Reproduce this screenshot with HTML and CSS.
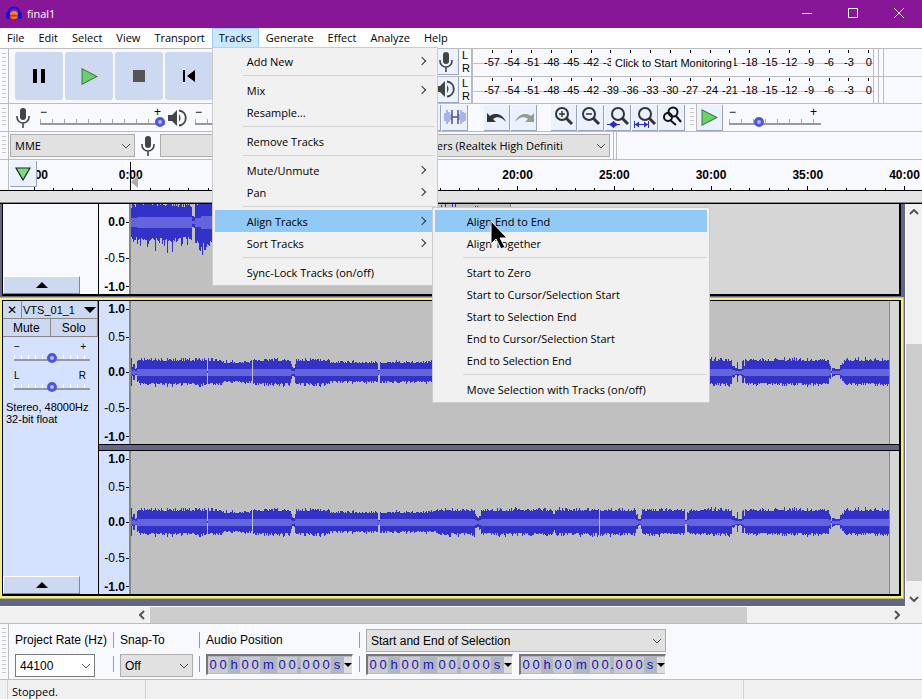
FILE: index.html
```html
<!DOCTYPE html>
<html lang="en">
<head>
    <meta charset="UTF-8">
    <meta name="viewport" content="width=device-width, initial-scale=1.0">
    <link rel="stylesheet" href="styles.css">
    <title>final1</title>
</head>
<body>
    <svg class="defs" aria-hidden="true">
        <symbol id="chevron" viewBox="0 0 10 6"><path d="M1 1l4 4 4-4" fill="none" stroke="#555"/></symbol>
        <symbol id="mic" viewBox="0 0 16 20"><rect x="5" y="0" width="6" height="12" rx="3" fill="#444"/><path d="M2 8v1a6 6 0 0 0 12 0V8M8 15v5" fill="none" stroke="#444" stroke-width="1.6"/></symbol>
        <symbol id="speaker" viewBox="0 0 19 18"><path d="M0 6h4l5-5v16l-5-5H0z" fill="#444"/><path d="M11 5q3 4 0 8z" fill="#444"/><path d="M11 1.500c9 1 9 14 0 15" fill="none" stroke="#444" stroke-width="1.800"/></symbol>
        <symbol id="play" viewBox="0 0 16 16"><path d="M1 .8v14.400L15 8z" fill="#6ad06a" stroke="#3f7a3f" stroke-width="1"/></symbol>
        <symbol id="lens" viewBox="0 0 22 22"><circle cx="9" cy="8" r="6" fill="none" stroke="#333" stroke-width="2"/><path d="M13 12l6 6" stroke="#333" stroke-width="3"/></symbol>
        <symbol id="undo" viewBox="0 0 22 12"><path d="M1 1v9h9L7 7c4-3 9-2 13 3C17 2 9 0 4 4z"/></symbol>
    </svg>

    <header class="titlebar">
        <svg class="logo" viewBox="0 0 16 14"><path d="M2.500 9V7a5.500 5.500 0 0 1 11 0v2" fill="none" stroke="#1010e0" stroke-width="2"/><rect x="0" y="6" width="4" height="7" rx="2" fill="#1010e0"/><rect x="12" y="6" width="4" height="7" rx="2" fill="#1010e0"/><ellipse cx="8" cy="9" rx="4" ry="4" fill="#f08a10"/><path d="M4 9.500l1-1 1 1 1-1.500 1 1.500 1-1.500 1 1.500 1-1 1 1v1H4z" fill="#e01818"/></svg>
        <span class="title">final1</span>
        <button class="winbtn" aria-label="Minimize"><svg viewBox="0 0 10 10"><path d="M0 5.500h10"/></svg></button>
        <button class="winbtn" aria-label="Maximize"><svg viewBox="0 0 10 10"><path d="M.5.5h9v9h-9z"/></svg></button>
        <button class="winbtn" aria-label="Close"><svg viewBox="0 0 10 10"><path d="M0 0l10 10M10 0L0 10"/></svg></button>
    </header>

    <nav class="menubar">
        <button>File</button>
        <button>Edit</button>
        <button>Select</button>
        <button>View</button>
        <button>Transport</button>
        <div class="open">
            <button>Tracks</button>
            <ul class="menu tracks-menu">
                <li><button class="more">Add New</button></li>
                <li class="sep"></li>
                <li><button class="more">Mix</button></li>
                <li><button>Resample...</button></li>
                <li class="sep"></li>
                <li><button>Remove Tracks</button></li>
                <li class="sep"></li>
                <li><button class="more">Mute/Unmute</button></li>
                <li><button class="more">Pan</button></li>
                <li class="sep"></li>
                <li class="parent">
                    <button class="more hot">Align Tracks</button>
                    <ul class="menu align-menu">
                        <li class="parent">
                            <button class="hot">Align End to End</button>
                            <svg class="cursor" viewBox="0 0 18 30"><path d="M1 1v23l5-5 5 10 4-2-5-9h7z" fill="#000" stroke="#fff" stroke-width="1"/></svg>
                        </li>
                        <li><button>Align Together</button></li>
                        <li class="sep"></li>
                        <li><button>Start to Zero</button></li>
                        <li><button>Start to Cursor/Selection Start</button></li>
                        <li><button>Start to Selection End</button></li>
                        <li><button>End to Cursor/Selection Start</button></li>
                        <li><button>End to Selection End</button></li>
                        <li class="sep"></li>
                        <li><button>Move Selection with Tracks (on/off)</button></li>
                    </ul>
                </li>
                <li><button class="more">Sort Tracks</button></li>
                <li class="sep"></li>
                <li><button>Sync-Lock Tracks (on/off)</button></li>
            </ul>
        </div>
        <button>Generate</button>
        <button>Effect</button>
        <button>Analyze</button>
        <button>Help</button>
    </nav>

    <section class="toolrow transport-row">
        <div class="dock transport">
            <i class="grip"></i>
            <button class="big" aria-label="Pause"><svg viewBox="0 0 14 14"><path d="M1 0h4v14H1zM9 0h4v14H9z"/></svg></button>
            <button class="big" aria-label="Play"><svg class="play"><use href="#play"/></svg></button>
            <button class="big" aria-label="Stop"><svg viewBox="0 0 14 14"><path d="M1 1h12v12H1z" fill="#555"/></svg></button>
            <button class="big" aria-label="Skip to Start"><svg viewBox="0 0 14 14"><path d="M1 1h2v12H1zM13 1v12L5 7z"/></svg></button>
        </div>
        <div class="meters">
            <div class="meter">
                <button class="tool" aria-label="Record meter"><svg class="mic"><use href="#mic"/></svg></button>
                <div class="lr"><span>L</span><span>R</span></div>
                <div class="scale"></div>
                <span class="hint">Click to Start Monitoring</span>
            </div>
            <div class="meter">
                <button class="tool" aria-label="Playback meter"><svg class="speaker"><use href="#speaker"/></svg></button>
                <div class="lr"><span>L</span><span>R</span></div>
                <div class="scale"></div>
            </div>
        </div>
    </section>

    <section class="toolrow">
        <div class="dock mixer">
            <i class="grip"></i>
            <svg class="mic"><use href="#mic"/></svg>
            <label class="slider"><span>−</span><span>+</span><input type="range" aria-label="Recording volume" value="100"></label>
            <svg class="speaker"><use href="#speaker"/></svg>
            <label class="slider"><span>−</span><span>+</span><input type="range" aria-label="Playback volume" value="100"></label>
        </div>
        <div class="tools">
            <button class="tool" aria-label="Trim"></button>
            <button class="tool" aria-label="Silence"><svg viewBox="0 0 22 16"><path d="M1 4v8M3 1v14M5 3v10M7 5v6M15 5v6M17 1v14M19 3v10M21 4v8" stroke="#8a97e8" stroke-width="1.400"/><path d="M8 1v14M14 1v14M8 8h6" stroke="#556" stroke-width="1.500"/></svg></button>
        </div>
        <div class="tools">
            <button class="tool" aria-label="Undo"><svg viewBox="0 0 22 16"><g transform="translate(0 3)" fill="#333"><use href="#undo" width="22" height="12"/></g></svg></button>
            <button class="tool" aria-label="Redo"><svg viewBox="0 0 22 16"><g transform="translate(22 3) scale(-1 1)" fill="#999"><use href="#undo" width="22" height="12"/></g></svg></button>
        </div>
        <div class="tools">
            <button class="tool" aria-label="Zoom In"><svg viewBox="0 0 22 22"><use href="#lens"/><path d="M6 8h6M9 5v6" stroke="#333" stroke-width="1.500"/></svg></button>
            <button class="tool" aria-label="Zoom Out"><svg viewBox="0 0 22 22"><use href="#lens"/><path d="M6 8h6" stroke="#333" stroke-width="1.500"/></svg></button>
            <button class="tool" aria-label="Fit Selection"><svg viewBox="0 0 22 22"><use href="#lens" x="2"/><path d="M0 18.500h13M6.500 15v7" stroke="#2b2bc8"/><path d="M2 18.500l4-3v6zM11 18.500l-4-3v6z" fill="#2b2bc8"/></svg></button>
            <button class="tool" aria-label="Fit Project"><svg viewBox="0 0 22 22"><use href="#lens" x="2"/><path d="M.5 15v7M14.500 15v7M0 18.500h15" stroke="#2b2bc8"/><path d="M1 18.500l4-3v6zM14 18.500l-4-3v6z" fill="#2b2bc8"/></svg></button>
            <button class="tool" aria-label="Zoom Toggle"><svg viewBox="0 0 22 22"><g fill="none" stroke="#111" stroke-width="2"><circle cx="7" cy="11" r="4"/><circle cx="12" cy="6" r="4.500"/><path d="M9 14l6 5M15 10l5 6"/></g></svg></button>
        </div>
        <i class="grip small"></i>
        <button class="tool" aria-label="Play-at-Speed"><svg class="play"><use href="#play"/></svg></button>
        <label class="slider speed"><span>−</span><span>+</span><input type="range" aria-label="Playback speed" value="31"></label>
    </section>

    <section class="toolrow devices">
        <i class="grip"></i>
        <label class="select host"><select aria-label="Audio host"><option>MME</option></select><svg><use href="#chevron"/></svg></label>
        <svg class="mic"><use href="#mic"/></svg>
        <label class="select device"><select aria-label="Recording device"><option></option></select><svg><use href="#chevron"/></svg></label>
        <label class="select output"><select aria-label="Playback device"><option>Speakers (Realtek High Definiti</option></select><svg><use href="#chevron"/></svg></label>
        <i class="divider"></i>
    </section>

    <section class="timeline">
        <div class="minutes"></div>
        <i class="playhead"></i>
        <button class="tool pin" aria-label="Pinned play head"><svg viewBox="0 0 16 14"><path d="M1 1h14L8 13z" fill="#7bdc78" stroke="#222" stroke-width="1.200"/></svg></button>
    </section>

    <main class="project">
        <div class="tracks">
            <article class="track scrolled">
                <div class="panel">
                    <button class="collapse" aria-label="Collapse"></button>
                </div>
                <div class="channels">
                    <div class="channel">
                        <div class="levels"><b>0.0</b><span>-0.5</span><b>-1.0</b></div>
                        <svg class="wave first" viewBox="0 0 379 90" preserveAspectRatio="none" data-clip="first"></svg>
                        <div class="blank"></div>
                    </div>
                </div>
            </article>
            <article class="track selected">
                <div class="panel">
                    <div class="pair name"><button aria-label="Close track">✕</button><button>VTS_01_1<i></i></button></div>
                    <div class="pair"><button>Mute</button><button>Solo</button></div>
                    <label class="slider"><span>−</span><span>+</span><input type="range" aria-label="Gain"></label>
                    <label class="slider"><span>L</span><span>R</span><input type="range" aria-label="Pan"></label>
                    <p>Stereo, 48000Hz<br>32-bit float</p>
                    <button class="collapse" aria-label="Collapse"></button>
                </div>
                <div class="channels">
                    <div class="channel">
                        <div class="levels"><b>1.0</b><span>0.5</span><b>0.0</b><span>-0.5</span><b>-1.0</b></div>
                        <svg class="wave" viewBox="0 0 758 143" preserveAspectRatio="none" data-clip="second"></svg>
                        <div class="blank end"></div>
                    </div>
                    <div class="channel">
                        <div class="levels"><b>1.0</b><span>0.5</span><b>0.0</b><span>-0.5</span><b>-1.0</b></div>
                        <svg class="wave" viewBox="0 0 758 143" preserveAspectRatio="none" data-clip="second"></svg>
                        <div class="blank end"></div>
                    </div>
                </div>
            </article>
        </div>
        <div class="vscroll">
            <button aria-label="Scroll up"><svg class="up"><use href="#chevron"/></svg></button>
            <i class="thumb"></i>
            <button aria-label="Scroll down"><svg><use href="#chevron"/></svg></button>
        </div>
    </main>
    <div class="hscroll">
        <button aria-label="Scroll left"><svg class="left"><use href="#chevron"/></svg></button>
        <i class="thumb"></i>
        <button aria-label="Scroll right"><svg class="right"><use href="#chevron"/></svg></button>
    </div>

    <section class="selection">
        <i class="grip"></i>
        <div class="field">
            <label for="rate">Project Rate (Hz)</label>
            <div class="select rate"><input type="text" id="rate" value="44100"><svg><use href="#chevron"/></svg></div>
        </div>
        <div class="field ruled">
            <label for="snap">Snap-To</label>
            <div class="select snap"><select id="snap"><option>Off</option></select><svg><use href="#chevron"/></svg></div>
        </div>
        <div class="field ruled">
            <span>Audio Position</span>
            <div class="time"></div>
        </div>
        <div class="field ruled">
            <div class="select range"><select aria-label="Selection mode"><option>Start and End of Selection</option></select><svg><use href="#chevron"/></svg></div>
            <div class="times"><div class="time"></div><div class="time"></div></div>
        </div>
    </section>

    <footer class="status">
        <span>Stopped.</span>
        <span></span>
        <span></span>
    </footer>
    <script src="app.js"></script>
</body>
</html>
```
FILE: styles.css
```css
*{
    box-sizing: border-box;
}
html, body{
    height: 100%;
}
body{
    margin: 0;
    display: flex;
    flex-direction: column;
    overflow: hidden;
    background: #f0f0f0;
    color: #000;
    font-family: "Open Sans", "Noto Sans", sans-serif;
    font-size: 11px;
}
button, input, select{
    margin: 0;
    padding: 0;
    border: 0;
    border-radius: 0;
    background: none;
    color: inherit;
    font: inherit;
}
svg{
    display: block;
    flex: none;
}
ul{
    list-style: none;
    margin: 0;
    padding: 0;
}
.defs{
    position: absolute;
    width: 0;
    height: 0;
}

/* title bar */
.titlebar{
    flex: none;
    display: flex;
    align-items: center;
    height: 28px;
    padding: 0 0 2px 6px;
    background: #881798;
    color: #fff;
}
.logo{
    width: 16px;
    height: 14px;
    margin-right: 5px;
}
.title{
    flex: 1;
}
.winbtn{
    display: grid;
    place-items: center;
    width: 46px;
    height: 26px;
}
.winbtn svg{
    width: 10px;
    height: 10px;
    fill: none;
    stroke: #fff;
}

/* menus */
.menubar{
    flex: none;
    display: flex;
    height: 20px;
    background: #fff;
}
.menubar > button, .open > button{
    height: 20px;
    padding: 0 7px;
    line-height: 20px;
}
.open{
    position: relative;
}
.open > button{
    background: #cce8ff;
    outline: 1px solid #99d1ff;
    outline-offset: -1px;
}
.menu{
    position: absolute;
    z-index: 5;
    padding: 2px;
    border: 1px solid #ccc;
    background: #f1f1f1;
}
.tracks-menu{
    top: 19px;
    left: 0;
    width: 226px;
}
.align-menu{
    top: -3px;
    left: 217px;
    width: 278px;
}
.parent{
    position: relative;
}
.menu button{
    display: flex;
    align-items: center;
    justify-content: space-between;
    width: 100%;
    height: 22px;
    padding: 0 10px 0 32px;
    text-align: left;
}
.menu .hot{
    background: #91c9f7;
}
.more::after{
    content: "";
    width: 5px;
    height: 5px;
    border: solid #333;
    border-width: 1px 1px 0 0;
    transform: rotate(45deg);
}
.sep{
    height: 7px;
    padding: 3px 0 3px 28px;
}
.sep::before{
    content: "";
    display: block;
    height: 1px;
    background: #d4d4d4;
}
.cursor{
    position: absolute;
    z-index: 6;
    top: 10px;
    left: 55px;
    width: 18px;
    height: 30px;
}

/* toolbars */
.toolrow{
    flex: none;
    display: flex;
    align-items: center;
    height: 28px;
    border-bottom: 1px solid #bbb;
    background: #f8f9ff;
}
.transport-row{
    height: 56px;
    border-top: 1px solid #bbb;
}
.dock{
    flex: 0 0 415px;
    display: flex;
    align-items: center;
    align-self: stretch;
    overflow: hidden;
}
.grip{
    flex: 0 0 9px;
    align-self: stretch;
    margin-right: 6px;
    border-right: 1px solid #bbb;
    background: repeating-linear-gradient(#c4c4c4 0 1px, transparent 1px 4px) 2px 4px / 4px calc(100% - 8px) no-repeat;
}
.grip.small{
    margin: 0 0 0 3px;
}
.transport{
    flex-basis: 433px;
    gap: 2px;
}
.transport .grip{
    margin-right: 4px;
}
.big{
    flex: none;
    display: grid;
    place-items: center;
    width: 48px;
    height: 48px;
    border-radius: 3px;
    background: #cdd9f0;
}
.big svg{
    width: 14px;
    height: 14px;
}
.big .play, .play{
    width: 17px;
    height: 17px;
}
.mic{
    width: 16px;
    height: 20px;
}
.speaker{
    width: 19px;
    height: 18px;
}
.mixer .grip{
    margin-right: 0;
}
.mixer .mic{
    margin: 0 9px 0 6px;
}
.mixer .speaker{
    margin: 0 8px 0 3px;
}
.tool{
    flex: none;
    display: grid;
    place-items: center;
    width: 26px;
    height: 26px;
    border: solid #9aa3bd;
    border-width: 0 1px 1px 0;
    background: #eaf1ff;
}
.tool svg:not([class]){
    width: 22px;
    height: 22px;
}
.tools{
    display: flex;
    gap: 1px;
    margin-right: 14px;
}
.tools:nth-of-type(2){
    margin-right: 16px;
}
.tools:last-of-type{
    margin-right: 0;
}
.slider{
    flex: none;
    display: flex;
    flex-wrap: wrap;
    justify-content: space-between;
    width: 125px;
    font-family: "Liberation Sans", Arial, sans-serif;
    font-size: 12px;
    line-height: 8px;
}
.slider span{
    padding: 0 4px 0 0;
}
.slider input{
    width: 100%;
    height: 12px;
    appearance: none;
    background:
        linear-gradient(#999, #999) 0 7px / 100% 2px no-repeat,
        repeating-linear-gradient(to right, #aaa 0 1px, transparent 1px 12px) 0 3px / 100% 4px no-repeat;
}
.slider input::-webkit-slider-thumb{
    appearance: none;
    width: 10px;
    height: 10px;
    border: 3px solid #4a55e8;
    border-radius: 50%;
    background: #bbb;
}
.speed{
    width: 92px;
    margin-left: 6px;
}

/* meters */
.meters{
    flex: 1;
    align-self: stretch;
    display: flex;
    flex-direction: column;
}
.meter{
    position: relative;
    flex: 1;
    display: flex;
    align-items: center;
    border-bottom: 1px solid #bbb;
    font-family: "Liberation Sans", Arial, sans-serif;
    font-size: 11px;
}
.meter:last-child{
    border-bottom: 0;
}
.lr{
    display: flex;
    flex-direction: column;
    width: 12px;
    padding-left: 3px;
    line-height: 13px;
}
.scale{
    flex: 0 1 403px;
    align-self: stretch;
    display: flex;
    justify-content: space-between;
    padding: 1px 4px 0 19px;
    border: 1px solid #bbb;
    border-width: 0 1px 0 2px;
    background: linear-gradient(#c4c4c4, #c4c4c4) 0 14px / 100% 1px no-repeat;
}
.scale span{
    display: flex;
    flex-direction: column;
    align-items: center;
    width: 0;
    line-height: 15px;
}
.scale span::before{
    content: "";
    flex: none;
    width: 1px;
    height: 3px;
    margin-bottom: 2px;
    background: #000;
}
.meter::after{
    content: "";
    align-self: stretch;
    width: 4px;
    margin-left: 4px;
    border: solid #bbb;
    border-width: 0 1px;
}
.hint{
    position: absolute;
    top: 5px;
    left: 178px;
    padding: 0 2px 0 4px;
    background: #f8f9ff;
    line-height: 18px;
}

/* drop-downs */
.select{
    display: grid;
    align-items: center;
    height: 23px;
    border: 1px solid #adadad;
    background: #e1e1e1;
}
.select > *{
    grid-area: 1 / 1;
}
.select select, .select input{
    width: 100%;
    height: 100%;
    padding: 0 20px 0 4px;
    appearance: none;
}
.select svg{
    justify-self: end;
    width: 10px;
    height: 6px;
    margin-right: 3px;
    pointer-events: none;
}
.devices .grip{
    margin-right: 1px;
}
.host{
    flex: 0 0 125px;
}
.devices .mic{
    margin: 0 4px 0 5px;
}
.device{
    flex: 0 0 220px;
}
.output{
    flex: 0 0 209px;
    margin-left: 21px;
}
.divider{
    align-self: stretch;
    width: 4px;
    margin-left: 3px;
    border: solid #bbb;
    border-width: 0 1px;
}

/* timeline */
.timeline{
    position: relative;
    flex: none;
    height: 44px;
    border-bottom: 1px solid #000;
    background: #e4e4e4;
    box-shadow: inset 0 -1px #888;
}
.minutes{
    display: flex;
    justify-content: space-between;
    align-items: flex-end;
    height: 31px;
    padding: 0 17px 0 34px;
    border-bottom: 1px solid #000;
    background: linear-gradient(#bbb, #bbb) 8px 0 / 1px 100% no-repeat, #f8f9ff;
    font: bold 12px/14px "Liberation Sans", Arial, sans-serif;
}
.minutes span{
    display: flex;
    flex-direction: column;
    align-items: center;
    width: 0;
}
.minutes span::after{
    content: "";
    width: 1px;
    height: 2px;
    background: #000;
}
.minutes .major::after{
    height: 4px;
    margin-top: 4px;
}
.playhead{
    position: absolute;
    top: 2px;
    left: 130px;
    width: 8px;
    height: 28px;
    border-left: 1px solid #000;
}
.playhead::after{
    content: "";
    display: block;
    margin-top: 14px;
    height: 12px;
    background: #aaa;
    clip-path: polygon(0 50%, 100% 0, 100% 100%);
}
.pin{
    position: absolute;
    top: 1px;
    left: 10px;
    width: 27px;
}
.pin svg:not([class]){
    width: 16px;
    height: 14px;
}

/* tracks */
.project{
    flex: 1;
    display: flex;
    min-height: 0;
}
.tracks{
    flex: 1;
    min-width: 0;
    padding-right: 2px;
    border-bottom: 1px solid #fff;
    background: #646687;
}
.track{
    display: flex;
    margin: 0 2px 0 2px;
    border: solid #000;
    border-width: 0 2px 2px 1px;
}
.track.selected{
    margin-top: 4px;
    border-top-width: 1px;
    box-shadow: 0 0 0 2px #f4f07a, 0 0 0 3px #b8b878;
}
.panel{
    flex: 0 0 96px;
    display: flex;
    flex-direction: column;
    border-right: 1px solid #000;
    background: #f8f9ff;
    font: 11px/12px "Liberation Sans", Arial, sans-serif;
}
.selected .panel{
    background: #d4e2ff;
}
.pair{
    display: grid;
    grid-template-columns: 1fr 1fr;
    height: 18px;
}
.name{
    grid-template-columns: 19px 1fr;
}
.pair button{
    display: flex;
    align-items: center;
    justify-content: center;
    border: solid #888;
    border-width: 0 1px 1px 0;
    background: #cdd9f0;
    font-size: 12px;
}
.name button:last-child{
    justify-content: space-between;
    padding: 0 1px;
    font-size: 11px;
}
.pair i{
    border: solid transparent;
    border-width: 6px 6px 0 6px;
    border-top-color: #000;
}
.panel .slider{
    width: 76px;
    margin: 4px 0 0 11px;
    font-size: 10px;
    line-height: 11px;
}
.panel .slider input{
    background:
        linear-gradient(#999, #999) 0 7px / 100% 2px no-repeat,
        repeating-linear-gradient(to right, #fff 0 1px, transparent 1px 7px) 0 3px / 100% 4px no-repeat;
}
.panel .slider + .slider{
    margin-top: 6px;
}
.panel p{
    margin: 8px 0 0 3px;
}
.collapse{
    display: grid;
    place-items: center;
    width: 77px;
    height: 18px;
    margin-top: auto;
    border: 1px solid #888;
    border-color: #fff #888 #888 #fff;
    background: #cdd9f0;
}
.collapse::before{
    content: "";
    border: solid transparent;
    border-width: 0 6px 6px;
    border-bottom-color: #000;
}
.channels{
    flex: 1;
    min-width: 0;
    display: flex;
    flex-direction: column;
    gap: 5px;
    background: #646687;
}
.channel{
    display: flex;
}
.channel + .channel{
    border-top: 1px solid #000;
}
.channel:not(:last-child){
    border-bottom: 1px solid #000;
}
.levels{
    flex: 0 0 32px;
    display: grid;
    grid-template-rows: 16px 40px 30px 42px 15px;
    justify-items: end;
    align-items: center;
    border: solid #888;
    border-width: 0 2px 0 0;
    background: #f8f9ff;
    font: 12px/14px "Liberation Sans", Arial, sans-serif;
}
.selected .levels{
    background: #d4e2ff;
}
.scrolled .levels{
    grid-template-rows: 30px 42px 15px;
    padding-top: 3px;
}
.levels > *{
    display: flex;
    align-items: center;
    gap: 1px;
}
.levels > *::after{
    content: "";
    width: 3px;
    height: 1px;
    background: #000;
}
.wave{
    flex: 758;
    min-width: 0;
    height: 143px;
    background: #c0c0c0;
    shape-rendering: crispEdges;
}
.wave.first{
    flex: 379;
    height: 90px;
}
.blank{
    flex: 388;
    border-left: 1px solid #888;
    background: #d6d6d6;
}
.blank.end{
    flex: 9;
}
.peak{
    fill: #3232c8;
}
.rms{
    fill: #6464dc;
}

/* scroll bars */
.vscroll{
    flex: 0 0 17px;
    display: flex;
    flex-direction: column;
    border-left: 1px solid #fff;
}
.vscroll button, .hscroll button{
    flex: none;
    display: grid;
    place-items: center;
    width: 16px;
    height: 16px;
}
.vscroll svg, .hscroll svg{
    width: 10px;
    height: 6px;
    stroke-width: 2px;
}
.up{
    transform: rotate(180deg);
}
.left{
    transform: rotate(90deg);
}
.right{
    transform: rotate(-90deg);
}
.thumb{
    background: #cdcdcd;
}
.vscroll .thumb{
    flex: 236;
    margin: 124px 0 10px;
}
.hscroll{
    flex: none;
    display: flex;
    height: 16px;
    padding: 0 17px 0 134px;
}
.hscroll .thumb{
    flex: 597;
    margin-right: 142px;
}

/* selection toolbar */
.selection{
    flex: none;
    display: flex;
    height: 57px;
    border: solid #bbb;
    border-width: 1px 0;
    background: #f8f9ff;
    font-family: "Liberation Sans", Arial, sans-serif;
    font-size: 12px;
}
.field{
    display: flex;
    flex-direction: column;
    gap: 2px;
    padding-top: 5px;
}
.field > label, .field > span{
    line-height: 23px;
}
.ruled{
    margin-left: 6px;
    padding-left: 7px;
    background: linear-gradient(#999 0 16px, transparent 16px 24px, #999 24px 40px) 0 8px / 1px 40px no-repeat;
}
.field .select{
    height: 23px;
}
.rate{
    width: 80px;
    border-color: #7a7a7a;
    background: #fff;
}
.snap{
    width: 73px;
}
.times{
    display: flex;
    gap: 6px;
}
.time{
    display: flex;
    align-items: center;
    width: 147px;
    height: 21px;
    border: solid #777;
    border-width: 2px 1px 1px 2px;
    border-right-color: #fff;
    border-bottom-color: #fff;
    background: #b0b6c2;
    color: #1414b4;
    font-size: 13px;
}
.time span{
    width: 10px;
    line-height: 16px;
    text-align: center;
}
.time .digit{
    background: #ccc;
}
.time .unit{
    width: 12px;
}
.time .wide{
    width: 17px;
}
.time .dot{
    width: 4px;
}
.time button{
    flex: none;
    width: 8px;
    height: 16px;
    margin-left: auto;
    background: #ddd;
}
.time button::before{
    content: "";
    display: block;
    border: solid transparent;
    border-width: 4px 4px 0;
    border-top-color: #000;
}

/* status bar */
.status{
    flex: none;
    display: flex;
    height: 19px;
    padding-left: 7px;
    line-height: 24px;
}
.status span{
    flex: 0 0 138px;
    padding-left: 4px;
    border-left: 1px solid #d0d0d0;
}
.status span:nth-child(2){
    flex: 1;
}
.status span:last-child{
    flex-basis: 179px;
}
```
FILE: app.js
```js
// meter scales
document.querySelectorAll('.scale').forEach(scale => {
    for (let db = -57; db <= 0; db += 3) {
        scale.innerHTML += '<span>' + db + '</span>';
    }
});

// time ruler, one tick per minute
const minutes = document.querySelector('.minutes');
for (let m = -5; m <= 40; m++) {
    minutes.innerHTML += m % 5 === 0 ? '<span class="major">' + m + ':00</span>' : '<span></span>';
}

// time fields
const kinds = { '0': 'digit', '.': 'dot', 'm': 'wide' };
document.querySelectorAll('.time').forEach(time => {
    for (const c of '00h00m00.000s') {
        time.innerHTML += '<span class="' + (kinds[c] || 'unit') + '">' + c + '</span>';
    }
    time.innerHTML += '<button aria-label="Format"></button>';
});

// loudness by x: [until, peak height, rms height]
const clips = {
    first: {
        center: 18,
        spread: 1,
        parts: [[6, 14, 4], [40, 16, 5], [61, 15, 5], [64, 5, 1], [70, 15, 4], [305, 19, 6], [324, 12, 5], [325, 17, 5], [379, 9, 5]]
    },
    second: {
        center: 71,
        spread: 0.4,
        parts: [[1, 14, 3], [2, 4, 1], [4, 7, 2], [6, 3, 1], [8, 9, 3], [76, 11, 3], [77, 1, 0], [91, 11, 3],
            [121, 9, 3], [122, 0, 0], [160, 11, 3], [161, 7, 2], [164, 4, 1], [165, 8, 3], [199, 11, 3],
            [247, 9, 3], [249, 2, 1], [305, 9, 3], [344, 11, 3], [346, 6, 2], [348, 4, 1], [350, 6, 2],
            [422, 11, 3], [424, 8, 3], [468, 11, 3], [469, 0, 0], [505, 11, 3], [507, 7, 2], [510, 3, 1],
            [511, 7, 2], [554, 11, 3], [556, 2, 1], [558, 9, 2], [601, 11, 3], [604, 5, 2], [606, 3, 1],
            [607, 10, 1], [611, 3, 1], [613, 11, 2], [614, 6, 3], [698, 11, 3], [700, 6, 2], [701, 1, 0],
            [704, 4, 1], [709, 3, 1], [711, 6, 2], [713, 8, 3], [758, 11, 3]]
    }
};

document.querySelectorAll('.wave').forEach(svg => {
    const clip = clips[svg.dataset.clip];
    const mid = clip.center;
    let seed = 7;
    const rand = () => (seed = seed * 16807 % 2147483647) / 2147483647;
    let peak = '';
    let rms = '';
    let x = 0;
    for (const [until, high, low] of clip.parts) {
        for (; x < until; x++) {
            const up = high + Math.round(rand() * rand() * high * clip.spread);
            const down = high + Math.round(rand() * rand() * high * clip.spread);
            if (high > 0) peak += 'M' + x + ' ' + (mid - up) + 'h1v' + (up + down) + 'h-1z';
            if (low > 0) rms += 'M' + x + ' ' + (mid - low) + 'h1v' + (low * 2 + 1) + 'h-1z';
        }
    }
    svg.innerHTML = '<path class="peak" d="' + peak + '"/><path class="rms" d="' + rms + '"/>';
});
```
